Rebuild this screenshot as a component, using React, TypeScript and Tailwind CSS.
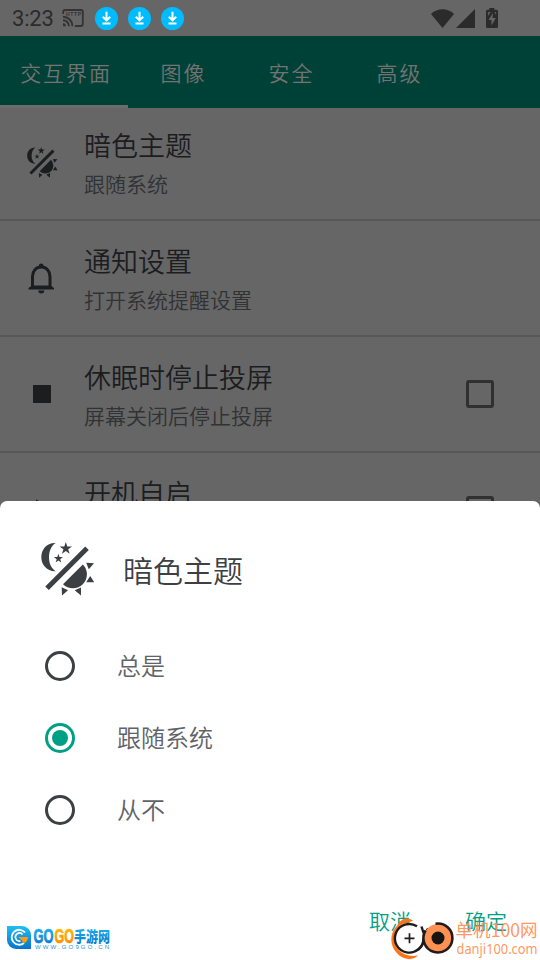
import { clsx } from "clsx";

const tabs = ["交互界面", "图像", "安全", "高级"];
const options = ["总是", "跟随系统", "从不"];

const ThemeIcon = ({ className }: { className?: string }) => (
  <svg viewBox="0 0 54 54" className={className} fill="currentColor">
    <path d="M14.7 1C5.8.5.3 7.4.3 15.3S6.5 29.7 14.7 29.2C10 26.2 8 21.2 8 15.3S10.3 3.6 14.7 1Z" />
    <path d="m24.8 0 1.5 4.5H31l-3.8 2.8 1.4 4.5-3.8-2.8-3.8 2.8 1.4-4.5-3.8-2.8h4.7Z" />
    <path d="m17.4 11.7 1.1 3.4H22l-2.8 2.1 1.1 3.4-2.9-2.1-2.8 2.1 1.1-3.4-2.9-2.1h3.5Z" />
    <path d="M6 46.3 46 6.3" stroke="currentColor" strokeWidth="5" />
    <path d="M41.8 22.4A13.6 13.6 0 0 1 22 42.200Z" />
    <path d="M45.2 20.7 53 21.3 47.8 27.3ZM49.200 34l4 6.300h-8ZM20.7 45.300 27 48.200 21 53.500ZM33.7 48.200 40 45.500v8Z" />
  </svg>
);

const BellIcon = () => (
  <svg viewBox="0 0 30 32" className="h-8 w-[30px]">
    <path d="M5.5 25.5V14.5C5.5 9 9 5 14.2 5S23 9 23 14.5v11" fill="none" stroke="currentColor" strokeWidth="3" />
    <path d="M1.5 27.5V26L5 23.5h18.5L27 26v1.5ZM11.8 5.5V4a2.4 2.4 0 0 1 4.8 0v1.5ZM11.3 28.5h6a3 3 0 0 1-6 0Z" fill="currentColor" />
  </svg>
);

const CastIcon = () => (
  <svg viewBox="0 0 22 18" className="ml-[8px] h-[18px] w-[22px] text-[#333]">
    <path d="M1.2 5V3q0-2 2-2h15.6q2 0 2 2v12q0 2-2 2H13" fill="none" stroke="currentColor" strokeWidth="1.8" />
    <path d="M1 7.7a9.5 9.5 0 0 1 9.5 9.5M1 11.2a6 6 0 0 1 6 6" fill="none" stroke="currentColor" strokeWidth="1.9" />
    <path d="M1 14.2a3 3 0 0 1 3 3H1Z" fill="currentColor" />
    <text x="4" y="6.8" fontSize="5" fontWeight="700" textLength="15" className="font-['Liberation_Sans',sans-serif]" fill="currentColor">HTTP</text>
  </svg>
);

const DownloadIcon = () => (
  <svg viewBox="0 0 23 23" className="size-[23px]">
    <circle cx="11.5" cy="11.5" r="11.5" fill="#00bcff" />
    <path d="M11.5 4.8v8M7.8 9.7l3.7 3.7 3.7-3.7M7.5 16.6h8" fill="none" stroke="#fff" strokeWidth="2" />
  </svg>
);

const StatusBar = () => (
  <div className="flex h-9 items-center pl-3 text-[#2b2b2b]">
    <span className="pt-0.5 font-['Roboto',sans-serif] text-[22px] leading-none font-normal tracking-[-0.2px]">3:23</span>
    <CastIcon />
    <div className="ml-[11px] flex gap-[10px]">
      <DownloadIcon />
      <DownloadIcon />
      <DownloadIcon />
    </div>
    <svg viewBox="0 0 68 22" className="ml-auto mr-[41px] h-[22px] w-[68px]" fill="currentColor">
      <path d="M0 7C6.5.8 16.5.8 23 7L11.5 21Z" />
      <path d="M44 2v19H25Z" />
      <path d="M58.3 2.7V1h5v1.7h2.2q1.5 0 1.5 1.5V19.5q0 1.5-1.5 1.5h-9Q55 21 55 19.5V4.2q0-1.5 1.5-1.5Z" />
      <path d="M62 6 57.5 13h3v5.5l4.3-7.5h-3.3ZM57.2 5h2.3l-2.3 4ZM63.5 5h1.3v3Z" fill="#666" />
    </svg>
  </div>
);

const StopIcon = () => <div className="size-[18px] bg-current" />;

const BootIcon = () => (
  <svg viewBox="0 0 30 30" className="h-[30px] w-[30px]" fill="none" stroke="currentColor" strokeWidth="2">
    <path d="M10 6v18l14-9Z" />
  </svg>
);

const rows = [
  { title: "暗色主题", sub: "跟随系统", icon: <ThemeIcon className="size-[31px]" />, check: false },
  { title: "通知设置", sub: "打开系统提醒设置", icon: <BellIcon />, check: false },
  { title: "休眠时停止投屏", sub: "屏幕关闭后停止投屏", icon: <StopIcon />, check: true },
  { title: "开机自启", sub: "", icon: <BootIcon />, check: true },
];

const SiteLogo = () => (
  <svg viewBox="0 0 106 28" className="absolute bottom-[8px] left-[6px] h-7 w-[106px]">
    <defs>
      <linearGradient id="blue" x1="0" y1="0" x2="0" y2="1">
        <stop offset="0" stopColor="#20bdf2" />
        <stop offset="1" stopColor="#0874ca" />
      </linearGradient>
      <linearGradient id="gold" x1="0" y1="0" x2="0" y2="1">
        <stop offset="0" stopColor="#ffc400" />
        <stop offset="1" stopColor="#ff8500" />
      </linearGradient>
    </defs>
    <path d="M1 2h15a9 9 0 0 1 9 9v14H10a9 9 0 0 1-9-9Z" fill="url(#blue)" />
    <path d="M19 8.5A7.5 7.5 0 1 0 18 19" fill="none" stroke="#fff" strokeWidth="1.8" />
    <path d="M16.5 10.5A4 4 0 1 0 14.5 17" fill="none" stroke="#fff" strokeWidth="1.7" />
    <path d="M12 13h10q0 5-5 6.5 0-2.5-2-4Z" fill="#ff9c13" />
    <g className="font-['Liberation_Sans_Narrow','Liberation_Sans',sans-serif]" fontWeight="700" fontSize="20.5">
      <text x="27.5" y="18.5" textLength="20" lengthAdjust="spacingAndGlyphs" fill="url(#blue)" stroke="url(#blue)" strokeWidth=".7">GO</text>
      <text x="48.5" y="18.5" textLength="19.5" lengthAdjust="spacingAndGlyphs" fill="url(#gold)" stroke="url(#gold)" strokeWidth=".7">GO</text>
    </g>
    <text x="68" y="17.5" fontSize="15" fontWeight="900" textLength="36" lengthAdjust="spacingAndGlyphs" fill="url(#blue)" className="font-['Noto_Sans_CJK_SC',sans-serif]">手游网</text>
    <text x="29" y="25.3" fontSize="6" fontWeight="400" textLength="74" fill="#1498dd" className="font-['Liberation_Sans',sans-serif]">WWW.GO9GO.CN</text>
  </svg>
);

const DanjiLogo = () => (
  <svg viewBox="0 0 150 46" className="absolute right-0 bottom-0 h-[46px] w-[150px]">
    <path d="M7 12C10 6 15 2 23 6.5L19 8.5C14 7.5 5 14 4.5 24 4 35 13 44 28 41.5 24 46 16 46 10 42-3 32 1 17 7 12Z" fill="#ff7416" />
    <path d="M27 12.3A14.3 14.3 0 1 0 33.5 24" fill="#fff" stroke="#211b1c" strokeWidth="2.4" />
    <path d="M31.5 12.5Q33 18 34.5 20.5L38 14.5M34.5 20.5Q35.5 30 28 36" fill="none" stroke="#211b1c" strokeWidth="2.4" />
    <circle cx="48" cy="24" r="14" fill="#ff9252" />
    <path d="M45.5 9.7A14.5 14.5 0 1 1 35.5 16.5" fill="none" stroke="#211b1c" strokeWidth="2.6" />
    <circle cx="48" cy="24" r="6.5" fill="#191414" />
    <path d="M14.5 24.3h10M19.5 19.3v10" stroke="#211b1c" strokeWidth="1.7" />
    <g fill="#ff8a4c" fillOpacity=".9" fontWeight="400">
      <text x="65.500" y="23.300" fontSize="18" textLength="82" lengthAdjust="spacingAndGlyphs" className="font-['Noto_Sans_CJK_SC',sans-serif]">单机100网</text>
      <text x="66.5" y="39.5" fontSize="14.5" textLength="81" lengthAdjust="spacingAndGlyphs" className="font-['Noto_Sans',sans-serif]">danji100.com</text>
    </g>
  </svg>
);

export default function App() {
  return (
    <div className="relative flex h-[960px] w-[540px] flex-col overflow-hidden bg-[#666] font-['Noto_Sans_CJK_SC',sans-serif] font-[350]">
      <StatusBar />
      <nav className="flex h-[72px] shrink-0 bg-[#004137] text-[21px] tracking-[1.9px] text-[#737373]">
        {tabs.map((tab, i) => (
          <div
            key={tab}
            className={clsx(
              "flex items-center justify-center border-b-3 pt-1",
              i === 0 ? "w-32 border-[#6b6b6b] pl-1" : "w-[108px] border-transparent pl-[3px]"
            )}
          >
            {tab}
          </div>
        ))}
      </nav>

      <main className="-mt-[3px] flex h-[396px] shrink-0 flex-col overflow-hidden">
        {rows.map((row) => (
          <div key={row.title} className="flex h-[116px] shrink-0 items-center border-b-2 border-[#575757] text-[#1b1d1f]">
            <div className="flex w-[84px] justify-center">{row.icon}</div>
            <div className="flex flex-1 flex-col pt-1.5">
              <div className="text-[27px] leading-9">{row.title}</div>
              <div className="h-10 text-[21px] leading-10 text-[#303234]">{row.sub}</div>
            </div>
            {row.check && <div className="mr-[46px] size-7 rounded-[3px] border-3 border-[#303030]" />}
          </div>
        ))}
      </main>

      <section className="relative flex flex-1 flex-col rounded-t-[7px] bg-white">
        <header className="flex h-[137px] items-center gap-[28px] pl-[41px] text-[#3c4043]">
          <ThemeIcon className="-mt-px size-[54px]" />
          <h2 className="-mt-px text-[30px] leading-none">暗色主题</h2>
        </header>
        <div className="-mt-2 flex flex-col">
          {options.map((option, i) => (
            <div key={option} className="flex h-[72px] items-center pl-[45px] text-2xl text-[#5f6368]">
              <div
                className={clsx(
                  "mr-[42px] flex size-[30px] items-center justify-center rounded-full border-3",
                  i === 1 ? "border-[#00a086]" : "border-[#3c4043]"
                )}
              >
                {i === 1 && <div className="size-4 rounded-full bg-[#00a086]" />}
              </div>
              <span className="-mt-0.5">{option}</span>
            </div>
          ))}
        </div>
        <footer className="mt-auto mb-5 flex justify-end gap-[54px] pr-[33px] text-[21px] leading-10 text-[#00a086]">
          <button>取消</button>
          <button>确定</button>
        </footer>
        <SiteLogo />
        <DanjiLogo />
      </section>
    </div>
  );
}
